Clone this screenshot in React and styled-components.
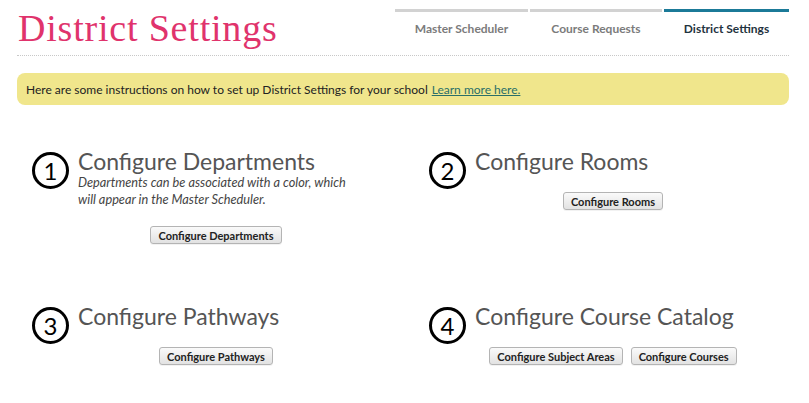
import React from 'react';
import styled, { createGlobalStyle } from 'styled-components';

const GlobalStyle = createGlobalStyle`
  body {
    margin: 0;
    background: #fff;
    font-family: Lato, "Open Sans", sans-serif;
  }
`;

const Page = styled.div`
  width: 809px;
  height: 403px;
  box-sizing: border-box;
  padding: 0 20px 0 17px;
  overflow: hidden;
`;

const Header = styled.div`
  display: flex;
  justify-content: space-between;
  align-items: flex-start;
  height: 55px;
  border-bottom: 1px dotted #c8c8c8;
`;

const PageTitle = styled.h1`
  margin: 8px 0 0 1px;
  font-family: "Liberation Serif", serif;
  font-weight: 400;
  font-size: 38px;
  line-height: 40px;
  letter-spacing: 0.8px;
  color: #e0336c;
`;

const Tabs = styled.nav`
  display: flex;
  gap: 2px;
  margin-top: 9px;
`;

const Tab = styled.div`
  width: ${({ $width }) => $width}px;
  border-top: 3px solid ${({ $active }) => ($active ? '#1b7a98' : '#d2d2d2')};
  padding-top: 9px;
  text-align: center;
  font-size: 12px;
  font-weight: 700;
  color: ${({ $active }) => ($active ? '#1f3340' : '#7b7b7b')};
`;

const Banner = styled.div`
  margin-top: 17px;
  height: 32px;
  display: flex;
  align-items: center;
  padding: 0 9px;
  background: #f0e68c;
  border-radius: 8px;
  font-size: 12px;
  color: #222;
`;

const Link = styled.a`
  margin-left: 4px;
  color: #2a6f68;
  text-decoration: underline;
`;

const Sections = styled.div`
  display: grid;
  grid-template-columns: 397px 375px;
  margin-top: 43px;
`;

const Section = styled.div`
  display: flex;
  gap: 9px;
  min-height: 155px;
  padding-left: 15px;
`;

const Step = styled.div`
  flex: none;
  width: 37px;
  height: 37px;
  margin-top: 4px;
  box-sizing: border-box;
  border: 3px solid #000;
  border-radius: 50%;
  display: flex;
  align-items: center;
  justify-content: center;
  font-size: 24px;
  color: #000;
`;

const Body = styled.div`
  width: 276px;
  display: flex;
  flex-direction: column;
`;

const SectionTitle = styled.h2`
  margin: 0;
  font-size: 23px;
  font-weight: 400;
  line-height: 26px;
  color: #555;
  white-space: nowrap;
`;

const Description = styled.p`
  margin: 0;
  font-size: 12.75px;
  font-style: italic;
  line-height: 17px;
  color: #444;
`;

const Actions = styled.div`
  display: flex;
  justify-content: center;
  gap: 8px;
  margin-top: 18px;
`;

const Button = styled.button`
  height: 18px;
  padding: 0 7px;
  font-family: Lato, "Open Sans", sans-serif;
  font-size: 11px;
  font-weight: 700;
  color: #222;
  background: linear-gradient(#fafafa, #e2e2e2);
  border: 1px solid #b4b4b4;
  border-radius: 3px;
  box-shadow: 0 1px 0 rgba(0, 0, 0, 0.05);
`;

const sections = [
  {
    n: 1,
    title: 'Configure Departments',
    text: 'Departments can be associated with a color, which will appear in the Master Scheduler.',
    buttons: ['Configure Departments'],
  },
  { n: 2, title: 'Configure Rooms', buttons: ['Configure Rooms'] },
  { n: 3, title: 'Configure Pathways', buttons: ['Configure Pathways'] },
  { n: 4, title: 'Configure Course Catalog', buttons: ['Configure Subject Areas', 'Configure Courses'] },
];

const App = () => (
  <>
    <GlobalStyle />
    <Page>
      <Header>
        <PageTitle>District Settings</PageTitle>
        <Tabs>
          <Tab $width={133}>Master Scheduler</Tab>
          <Tab $width={132}>Course Requests</Tab>
          <Tab $width={125} $active>District Settings</Tab>
        </Tabs>
      </Header>
      <Banner>
        Here are some instructions on how to set up District Settings for your school
        <Link href="#">Learn more here.</Link>
      </Banner>
      <Sections>
        {sections.map((s) => (
          <Section key={s.n}>
            <Step>{s.n}</Step>
            <Body>
              <SectionTitle>{s.title}</SectionTitle>
              {s.text && <Description>{s.text}</Description>}
              <Actions>
                {s.buttons.map((b) => (
                  <Button key={b}>{b}</Button>
                ))}
              </Actions>
            </Body>
          </Section>
        ))}
      </Sections>
    </Page>
  </>
);

export default App;
